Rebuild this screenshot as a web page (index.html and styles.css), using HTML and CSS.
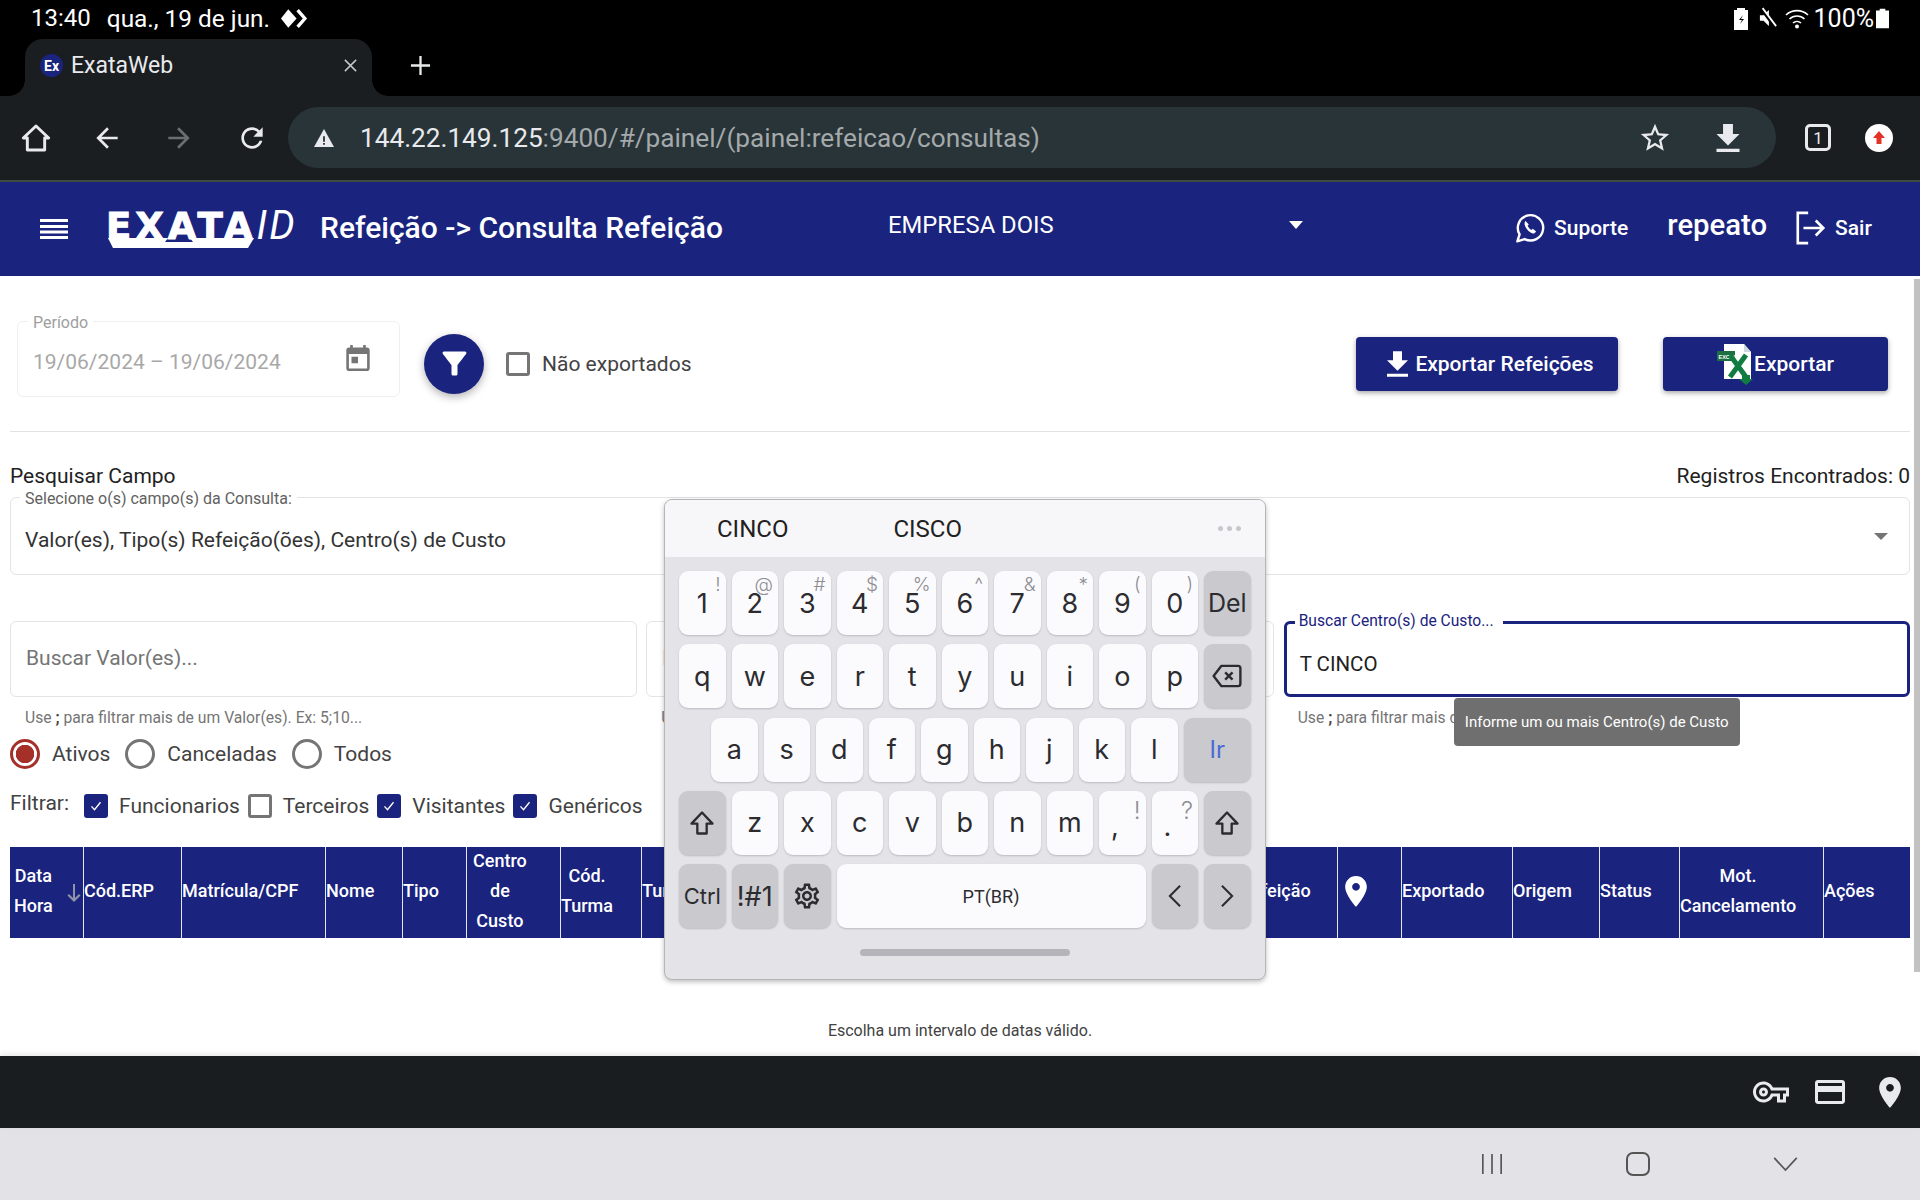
FILE: index.html
```html
<!DOCTYPE html>
<html lang="pt-BR">
<head>
  <meta charset="UTF-8">
  <title>ExataWeb</title>
  <link rel="stylesheet" href="styles.css">
</head>
<body>
  <svg class="defs" width="0" height="0">
    <symbol id="iconPin" viewBox="5 2 14 20"><path fill-rule="evenodd" d="M12 2C8.13 2 5 5.13 5 9c0 5.25 7 13 7 13s7-7.75 7-13c0-3.87-3.13-7-7-7zm0 9.5c-1.38 0-2.5-1.12-2.5-2.5s1.12-2.5 2.5-2.5 2.5 1.12 2.5 2.5-1.12 2.5-2.5 2.5z"/></symbol>
    <symbol id="iconShift" viewBox="0 0 24 24"><path d="M12 3 3 12.5h5V21h8v-8.5h5z" fill="none" stroke="currentColor" stroke-width="2" stroke-linejoin="round"/></symbol>
    <symbol id="iconCheck" viewBox="0 0 24 24"><path d="M6 12.5l4 4.5 8-10" fill="none" stroke="#fff" stroke-width="1.8"/></symbol>
    <symbol id="iconDownload" viewBox="5 3 14 17"><path d="M19 9h-4V3H9v6H5l7 7 7-7zM5 18v2h14v-2H5z"/></symbol>
  </svg>

  <!-- Barra de status do tablet -->
  <div class="statusBar">
    <span class="statusTime">13:40</span>
    <span class="statusDate">qua., 19 de jun.</span>
    <svg class="statusDiamond" viewBox="0 0 26 18"><path d="M7 0l8 9-8 9-7-9z" fill="#fff"/><path d="M16 1l7 8-7 8" fill="none" stroke="#fff" stroke-width="3.2"/></svg>
    <div class="statusRight">
      <svg class="statusIcon" viewBox="0 0 14 24"><path d="M3 4V2h8v2h3v20H0V4z" fill="#fff"/><path d="M9 9l-4 5h3l-2 4 4-5H7z" fill="#000"/></svg>
      <svg class="statusIcon mute" viewBox="0 0 20 24"><path d="M1 9v6h4l6 6V3L5 9z" fill="#fff"/><path d="M3 2l15 20" stroke="#000" stroke-width="4"/><path d="M4 1l15 20" stroke="#fff" stroke-width="2"/></svg>
      <svg class="statusIcon wifi" viewBox="0 0 24 24"><path d="M1 9a16 16 0 0 1 22 0M4.5 13a11 11 0 0 1 15 0M8 17a6 6 0 0 1 8 0" fill="none" stroke="#fff" stroke-width="1.6"/><circle cx="12" cy="20.5" r="2" fill="#fff"/></svg>
      <span class="statusPercent">100%</span>
      <svg class="statusBattery" viewBox="0 0 14 24"><path d="M4 2h6v2h4v19H0V4h4z" fill="#fff"/></svg>
    </div>
  </div>

  <!-- Abas do navegador -->
  <div class="tabStrip">
    <div class="tab">
      <span class="favicon">Ex</span>
      <span class="tabTitle">ExataWeb</span>
      <svg class="tabClose" viewBox="0 0 16 16"><path d="M2 2l12 12M14 2L2 14" stroke="#c4c7c8" stroke-width="1.6"/></svg>
    </div>
    <svg class="tabNew" viewBox="0 0 22 22"><path d="M11 1v20M1 11h20" stroke="#e8eaea" stroke-width="2.4"/></svg>
  </div>

  <!-- Barra de endereço -->
  <div class="urlBar">
    <svg class="navIcon home" viewBox="0 0 24 24"><path d="M12 3 2.5 12H5.5v9h13v-9h3z" fill="none" stroke="#e8eaed" stroke-width="2.2" stroke-linejoin="round"/></svg>
    <svg class="navIcon back" viewBox="0 0 24 24"><path fill="#e8eaed" d="M20 11H7.83l5.59-5.59L12 4l-8 8 8 8 1.41-1.41L7.83 13H20v-2z"/></svg>
    <svg class="navIcon forward" viewBox="0 0 24 24"><path fill="#6b6f72" d="M12 4l-1.41 1.41L16.17 11H4v2h12.17l-5.58 5.59L12 20l8-8z"/></svg>
    <svg class="navIcon reload" viewBox="0 0 24 24"><path fill="#e8eaed" d="M17.65 6.35C16.2 4.9 14.21 4 12 4c-4.42 0-7.99 3.58-7.99 8s3.57 8 7.99 8c3.73 0 6.84-2.55 7.73-6h-2.08c-.82 2.33-3.04 4-5.65 4-3.31 0-6-2.69-6-6s2.69-6 6-6c1.66 0 3.14.69 4.22 1.78L13 11h7V4l-2.35 2.35z"/></svg>
    <div class="urlPill">
      <svg class="urlWarning" viewBox="0 0 24 22"><path d="M1 21h22L12 1z" fill="#e8eaed"/><path d="M11 9h2v6h-2zM11 16.5h2v2h-2z" fill="#283438"/></svg>
      <span class="urlText"><span class="urlHost">144.22.149.125</span>:9400/#/painel/(painel:refeicao/consultas)</span>
      <svg class="urlStar" viewBox="0 0 24 24"><path fill="#e8eaed" d="M22 9.24l-7.19-.62L12 2 9.19 8.63 2 9.24l5.46 4.73L5.82 21 12 17.27 18.18 21l-1.63-7.03L22 9.24zM12 15.4l-3.76 2.27 1-4.28-3.32-2.88 4.38-.38L12 6.1l1.71 4.04 4.38.38-3.32 2.88 1 4.28L12 15.4z"/></svg>
      <svg class="urlDownload"><use href="#iconDownload"/></svg>
    </div>
    <span class="tabCount">1</span>
    <span class="updateDot"><svg viewBox="0 0 12 14"><path d="M6 0 0 7h3.5v6h5V7H12z" fill="#e53227"/></svg></span>
  </div>

  <!-- Cabeçalho do sistema -->
  <header class="appHeader">
    <svg class="menuIcon" viewBox="0 0 28 20"><path d="M0 1.5h28M0 7.5h28M0 13h28M0 18.5h28" stroke="#fff" stroke-width="3"/></svg>
    <div class="logo">
      <span class="logoExata">EXATA</span><span class="logoId">ID</span>
      <svg class="logoSwoosh" viewBox="0 0 146 10"><path d="M0 0h60l-3 4h28l-3-4h64l-6 10H5z" fill="#fff"/></svg>
    </div>
    <span class="pageTitle">Refeição -&gt; Consulta Refeição</span>
    <div class="companySelect">
      <span>EMPRESA DOIS</span>
      <i class="caret"></i>
    </div>
    <div class="headerLink support">
      <svg class="whatsIcon" viewBox="0 0 24 24"><path d="M2.5 22l1.7-5.3A9.5 9.5 0 1 1 8 20.3z" fill="none" stroke="#fff" stroke-width="1.8" stroke-linejoin="round"/><path d="M8.7 6.8c-1.2.9-1.1 3.2.9 5.9 2.1 2.7 4.4 3.8 5.8 3.2l1.2-1.3-2.5-2-1.1.9c-1.1-.6-2.2-1.8-2.8-3.1l.9-1z" fill="#fff"/></svg>
      <span>Suporte</span>
    </div>
    <span class="userName">repeato</span>
    <div class="headerLink logout">
      <svg class="logoutIcon" viewBox="0 0 32 36"><path d="M13 2H2v32h11" fill="none" stroke="#fff" stroke-width="2.8"/><path d="M8 18h21M21 10l8 8-8 8" fill="none" stroke="#fff" stroke-width="2.8"/></svg>
      <span>Sair</span>
    </div>
  </header>

  <main class="content">
    <!-- Período e exportação -->
    <section class="topRow">
      <div class="field periodField">
        <span class="fieldLabel">Período</span>
        <span class="periodValue">19/06/2024 – 19/06/2024</span>
        <svg class="calendarIcon" viewBox="3 2 18 20"><path fill="#757575" fill-rule="evenodd" d="M19 4h-1V2h-2v2H8V2H6v2H5c-1.1 0-2 .9-2 2v14c0 1.1.9 2 2 2h14c1.1 0 2-.9 2-2V6c0-1.1-.9-2-2-2zm0 16H5V9h14v11zM7 11h5v5H7z"/></svg>
      </div>
      <button class="filterButton">
        <svg viewBox="3 3 18 18"><path fill="#fff" d="M4.25 5.61C6.27 8.2 10 13 10 13v6c0 .55.45 1 1 1h2c.55 0 1-.45 1-1v-6s3.72-4.8 5.74-7.39A.998.998 0 0 0 18.95 4H5.04c-.83 0-1.3.95-.79 1.61z"/></svg>
      </button>
      <label class="check notExported"><i class="checkBox"></i>Não exportados</label>
      <div class="exportGroup">
        <button class="exportButton mealsButton">
          <svg class="btnDownload"><use href="#iconDownload"/></svg>
          Exportar Refeições
        </button>
        <button class="exportButton excelButton">
          <svg class="excelIcon" viewBox="0 0 36 42">
            <path d="M7 1h20l7 8v27H7z" fill="#fff"/>
            <path d="M27 1v8h7z" fill="#cfd8dc"/>
            <rect x="0" y="8" width="18" height="10" fill="#1d6f42"/>
            <text x="1.5" y="15.5" class="excelLabel">EXCEL</text>
            <path d="M13 12l16 22M29 12 13 34" stroke="#107c41" stroke-width="5"/>
            <path d="M25 32h8v4h3l-7 6-7-6h3z" fill="#107c41"/>
          </svg>
          Exportar
        </button>
      </div>
    </section>

    <!-- Pesquisa -->
    <div class="searchHead">
      <span>Pesquisar Campo</span>
      <span>Registros Encontrados: 0</span>
    </div>
    <div class="field selectField">
      <span class="fieldLabel">Selecione o(s) campo(s) da Consulta:</span>
      <span class="selectValue">Valor(es), Tipo(s) Refeição(ões), Centro(s) de Custo</span>
      <i class="selectCaret"></i>
    </div>

    <div class="searchGrid">
      <div class="searchCol">
        <div class="field inputField"><span class="placeholder">Buscar Valor(es)...</span></div>
        <p class="hint">Use <b>;</b> para filtrar mais de um Valor(es). Ex: 5;10...</p>
      </div>
      <div class="searchCol">
        <div class="field inputField"><span class="placeholder">Buscar Tipo(s) Refeição(ões)...</span></div>
        <p class="hint">Use <b>;</b> para filtrar mais de um Tipo(s) Refeição(ões)...</p>
      </div>
      <div class="searchCol">
        <div class="field inputField focused">
          <span class="fieldLabel">Buscar Centro(s) de Custo...</span>
          <span class="inputValue">T CINCO</span>
        </div>
        <p class="hint">Use <b>;</b> para filtrar mais de um Centro(s) de Custo. Ex: 3;8...</p>
        <div class="tooltip">Informe um ou mais Centro(s) de Custo</div>
      </div>
    </div>

    <div class="radioRow">
      <label class="radio selected"><i></i>Ativos</label>
      <label class="radio"><i></i>Canceladas</label>
      <label class="radio"><i></i>Todos</label>
    </div>

    <div class="filterRow">
      <span class="filterTitle">Filtrar:</span>
      <label class="check"><i class="checkBox on"><svg><use href="#iconCheck"/></svg></i>Funcionarios</label>
      <label class="check"><i class="checkBox"></i>Terceiros</label>
      <label class="check"><i class="checkBox on"><svg><use href="#iconCheck"/></svg></i>Visitantes</label>
      <label class="check"><i class="checkBox on"><svg><use href="#iconCheck"/></svg></i>Genéricos</label>
    </div>

    <!-- Tabela -->
    <div class="tableHead">
      <div class="th sorted">
        <div class="thStack">Data<br>Hora</div>
        <svg class="sortArrow" viewBox="0 0 16 20"><path fill="#8f93a8" d="M7 1h2v14l4-4 1.5 1.5L8 19l-6.5-6.5L3 11l4 4z"/></svg>
      </div>
      <div class="th">Cód.ERP</div>
      <div class="th">Matrícula/CPF</div>
      <div class="th">Nome</div>
      <div class="th">Tipo</div>
      <div class="th costCenter"><div class="thStack">Centro<br>de<br>Custo</div></div>
      <div class="th"><div class="thStack">Cód.<br>Turma</div></div>
      <div class="th">Turma</div>
      <div class="th"></div>
      <div class="th">Refeição</div>
      <div class="th pinCell"><svg class="pinIcon"><use href="#iconPin"/></svg></div>
      <div class="th">Exportado</div>
      <div class="th">Origem</div>
      <div class="th">Status</div>
      <div class="th"><div class="thStack">Mot.<br>Cancelamento</div></div>
      <div class="th">Ações</div>
    </div>
    <p class="emptyMessage">Escolha um intervalo de datas válido.</p>

    <div class="scrollThumb"></div>
  </main>

  <!-- Barra inferior do navegador -->
  <div class="bottomBar">
    <svg class="keyIcon" viewBox="0 0 24 24"><path fill="#e8eaed" fill-rule="evenodd" d="M22 19h-6v-4h-2.68c-1.14 2.42-3.6 4-6.32 4-3.86 0-7-3.14-7-7s3.14-7 7-7c2.72 0 5.17 1.58 6.32 4H24v6h-2v4zm-4-2h2v-4h2v-2H11.94l-.23-.67C11.01 8.34 9.11 7 7 7c-2.76 0-5 2.24-5 5s2.24 5 5 5c2.11 0 4.01-1.34 4.71-3.33l.23-.67H18v4zM7 15c-1.65 0-3-1.35-3-3s1.35-3 3-3 3 1.35 3 3-1.35 3-3 3zm0-4c-.55 0-1 .45-1 1s.45 1 1 1 1-.45 1-1-.45-1-1-1z"/></svg>
    <svg class="cardIcon" viewBox="2 4 20 16"><path fill="#e8eaed" fill-rule="evenodd" d="M20 4H4c-1.11 0-1.99.89-1.99 2L2 18c0 1.11.89 2 2 2h16c1.11 0 2-.89 2-2V6c0-1.11-.89-2-2-2zm0 14H4v-6h16v6zm0-10H4V6h16v2z"/></svg>
    <svg class="bottomPin"><use href="#iconPin"/></svg>
  </div>

  <!-- Barra de navegação do Android -->
  <div class="navBar">
    <svg class="sysRecents" viewBox="0 0 24 24"><path d="M2 1v22M12 1v22M22 1v22" stroke="#555" stroke-width="1.8"/></svg>
    <span class="sysHome"></span>
    <svg class="sysBack" viewBox="0 0 26 16"><path d="M1 1l12 13L25 1" fill="none" stroke="#555" stroke-width="1.8"/></svg>
  </div>

  <!-- Teclado flutuante -->
  <div class="keyboard">
    <div class="suggestions">
      <span class="sugA">CINCO</span>
      <span class="sugB">CISCO</span>
      <span class="sugMore"><i></i><i></i><i></i></span>
    </div>
    <div class="keyRows">
      <div class="keyRow">
        <span class="key">1<sup>!</sup></span><span class="key">2<sup>@</sup></span><span class="key">3<sup>#</sup></span><span class="key">4<sup>$</sup></span><span class="key">5<sup>%</sup></span><span class="key">6<sup>^</sup></span><span class="key">7<sup>&amp;</sup></span><span class="key">8<sup>*</sup></span><span class="key">9<sup>(</sup></span><span class="key">0<sup>)</sup></span><span class="key fn delKey">Del</span>
      </div>
      <div class="keyRow">
        <span class="key">q</span><span class="key">w</span><span class="key">e</span><span class="key">r</span><span class="key">t</span><span class="key">y</span><span class="key">u</span><span class="key">i</span><span class="key">o</span><span class="key">p</span>
        <span class="key fn"><svg class="backspaceIcon" viewBox="0 0 32 26"><path d="M10 2h18a2.5 2.5 0 0 1 2.5 2.5v17A2.5 2.5 0 0 1 28 24H10L1.5 13z" fill="none" stroke="#2c2c30" stroke-width="2.6" stroke-linejoin="round"/><path d="M14 9l8 8M22 9l-8 8" stroke="#2c2c30" stroke-width="2.6"/></svg></span>
      </div>
      <div class="keyRow homeRow">
        <span class="key">a</span><span class="key">s</span><span class="key">d</span><span class="key">f</span><span class="key">g</span><span class="key">h</span><span class="key">j</span><span class="key">k</span><span class="key">l</span><span class="key fn goKey">Ir</span>
      </div>
      <div class="keyRow">
        <span class="key fn"><svg class="shiftIcon"><use href="#iconShift"/></svg></span>
        <span class="key">z</span><span class="key">x</span><span class="key">c</span><span class="key">v</span><span class="key">b</span><span class="key">n</span><span class="key">m</span>
        <span class="key punct">,<sup>!</sup></span><span class="key punct">.<sup>?</sup></span>
        <span class="key fn"><svg class="shiftIcon"><use href="#iconShift"/></svg></span>
      </div>
      <div class="keyRow">
        <span class="key fn small">Ctrl</span>
        <span class="key fn">!#1</span>
        <span class="key fn"><svg class="gearIcon" viewBox="0 0 24 24"><path fill="#2c2c30" fill-rule="evenodd" d="M19.43 12.98c.04-.32.07-.64.07-.98 0-.34-.03-.66-.07-.98l2.11-1.65c.19-.15.24-.42.12-.64l-2-3.46c-.09-.16-.26-.25-.44-.25-.06 0-.12.01-.17.03l-2.49 1c-.52-.4-1.08-.73-1.69-.98l-.38-2.65C14.46 2.18 14.25 2 14 2h-4c-.25 0-.46.18-.49.42l-.38 2.65c-.61.25-1.17.59-1.69.98l-2.49-1c-.06-.02-.12-.03-.18-.03-.17 0-.34.09-.43.25l-2 3.46c-.13.22-.07.49.12.64l2.11 1.65c-.04.32-.07.65-.07.98 0 .33.03.66.07.98l-2.11 1.65c-.19.15-.24.42-.12.64l2 3.46c.09.16.26.25.44.25.06 0 .12-.01.17-.03l2.49-1c.52.4 1.08.73 1.69.98l.38 2.65c.03.24.24.42.49.42h4c.25 0 .46-.18.49-.42l.38-2.65c.61-.25 1.17-.59 1.69-.98l2.49 1c.06.02.12.03.18.03.17 0 .34-.09.43-.25l2-3.46c.12-.22.07-.49-.12-.64l-2.11-1.65zm-1.98-1.71c.04.31.05.52.05.73 0 .21-.02.43-.05.73l-.14 1.13.89.7 1.08.84-.7 1.21-1.27-.51-1.04-.42-.9.68c-.43.32-.84.56-1.25.73l-1.06.43-.16 1.13-.2 1.35h-1.4l-.19-1.35-.16-1.13-1.06-.43c-.43-.18-.83-.41-1.23-.71l-.91-.7-1.06.43-1.27.51-.7-1.21 1.08-.84.89-.7-.14-1.13c-.03-.31-.05-.54-.05-.74s.02-.43.05-.73l.14-1.13-.89-.7-1.08-.84.7-1.21 1.27.51 1.04.42.9-.68c.43-.32.84-.56 1.25-.73l1.06-.43.16-1.13.2-1.35h1.39l.19 1.35.16 1.13 1.06.43c.43.18.83.41 1.23.71l.91.7 1.06-.43 1.27-.51.7 1.21-1.07.85-.89.7.14 1.13zM12 8c-2.21 0-4 1.79-4 4s1.79 4 4 4 4-1.79 4-4-1.79-4-4-4zm0 6c-1.1 0-2-.9-2-2s.9-2 2-2 2 .9 2 2-.9 2-2 2z"/></svg></span>
        <span class="key spaceKey">PT(BR)</span>
        <span class="key fn"><svg class="arrowIcon" viewBox="0 0 14 24"><path d="M13 1 2 12l11 11" fill="none" stroke="#2c2c30" stroke-width="2.2"/></svg></span>
        <span class="key fn"><svg class="arrowIcon" viewBox="0 0 14 24"><path d="M1 1l11 11L1 23" fill="none" stroke="#2c2c30" stroke-width="2.2"/></svg></span>
      </div>
    </div>
    <div class="kbHandle"></div>
  </div>
</body>
</html>
```

FILE: styles.css
```css
* {
  box-sizing: border-box;
}

body {
  margin: 0;
  width: 1920px;
  height: 1200px;
  display: flex;
  flex-direction: column;
  overflow: hidden;
  position: relative;
  font-family: Roboto, "Liberation Sans", sans-serif;
  color: #212121;
  background: #fff;
}

.defs {
  position: absolute;
}

svg {
  display: block;
  flex: none;
}

/* Barra de status */
.statusBar {
  height: 39px;
  background: #000;
  color: #fff;
  display: flex;
  align-items: center;
  padding: 0 31px 3px 31px;
  font-size: 24px;
}

.statusDate {
  margin-left: 16px;
  font-size: 24.4px;
}

.statusDiamond {
  width: 27px;
  height: 19px;
  margin-left: 11px;
}

.statusRight {
  margin-left: auto;
  display: flex;
  align-items: center;
}

.statusIcon {
  width: 14px;
  height: 24px;
}

.statusIcon.mute {
  width: 18px;
  height: 22px;
  margin-left: 11px;
}

.statusIcon.wifi {
  width: 24px;
  height: 24px;
  margin-left: 8px;
}

.statusPercent {
  margin-left: 5px;
  font-size: 25px;
}

.statusBattery {
  width: 13px;
  height: 24px;
  margin-left: 2px;
}

/* Abas */
.tabStrip {
  height: 57px;
  background: #000;
  display: flex;
  align-items: center;
  padding-left: 25px;
}

.tab {
  width: 347px;
  height: 57px;
  background: #1a1e21;
  border-radius: 18px 18px 0 0;
  display: flex;
  align-items: center;
  padding: 0 14px 4px 15px;
  color: #e8eaed;
  font-size: 23px;
  position: relative;
}

.tab::before,
.tab::after {
  content: "";
  position: absolute;
  bottom: 0;
  width: 16px;
  height: 16px;
}

.tab::before {
  left: -16px;
  background: radial-gradient(circle at 0 0, #000 15.5px, #1a1e21 16px);
}

.tab::after {
  right: -16px;
  background: radial-gradient(circle at 100% 0, #000 15.5px, #1a1e21 16px);
}

.favicon {
  width: 23px;
  height: 23px;
  border-radius: 50%;
  background: #1a237e;
  color: #fff;
  font-size: 14px;
  font-weight: 700;
  display: flex;
  align-items: center;
  justify-content: center;
}

.tabTitle {
  margin-left: 8px;
}

.tabClose {
  width: 15px;
  height: 15px;
  margin-left: auto;
}

.tabNew {
  width: 21px;
  height: 21px;
  margin-left: 38px;
  margin-bottom: 4px;
}

/* Barra de endereço */
.urlBar {
  height: 86px;
  background: #1a1e21;
  border-bottom: 2px solid #3f4a3e;
  padding: 11px 0 12px;
  display: flex;
  align-items: center;
  position: relative;
  flex: none;
}

.navIcon {
  width: 32px;
  height: 32px;
}

.navIcon.home {
  margin-left: 20px;
}

.navIcon.back {
  margin-left: 39px;
}

.navIcon.forward {
  margin-left: 40px;
}

.navIcon.reload {
  margin-left: 41px;
}

.urlPill {
  width: 1488px;
  height: 61px;
  margin-left: 20px;
  background: #283438;
  border-radius: 31px;
  display: flex;
  align-items: center;
  padding-left: 25px;
}

.urlWarning {
  width: 22px;
  height: 20px;
}

.urlText {
  margin-left: 25px;
  font-size: 26.2px;
  color: #a4a9ab;
}

.urlHost {
  color: #e8eaed;
}

.urlStar {
  width: 34px;
  height: 34px;
  margin-left: auto;
}

.urlDownload {
  width: 24px;
  height: 28px;
  margin-left: 44px;
  margin-right: 36px;
  fill: #e8eaed;
}

.tabCount {
  width: 26px;
  height: 27px;
  border: 3px solid #e8eaed;
  border-radius: 5px;
  margin-left: 29px;
  color: #e8eaed;
  font-size: 17px;
  display: flex;
  align-items: center;
  justify-content: center;
}

.updateDot {
  width: 28px;
  height: 28px;
  margin-left: 34px;
  border-radius: 50%;
  background: #fff;
  display: flex;
  align-items: center;
  justify-content: center;
}

.updateDot svg {
  width: 12px;
  height: 14px;
}

/* Cabeçalho */
.appHeader {
  height: 94px;
  background: #1a237e;
  color: #fff;
  display: flex;
  align-items: center;
  padding-left: 40px;
  flex: none;
}

.menuIcon {
  width: 28px;
  height: 20px;
}

.logo {
  width: 192px;
  height: 40px;
  margin-left: 38px;
  position: relative;
  white-space: nowrap;
  line-height: 34px;
  flex: none;
}

.logoExata {
  font-family: "DejaVu Sans", sans-serif;
  font-weight: 700;
  font-size: 37px;
  letter-spacing: 4px;
  -webkit-text-stroke: 1px #fff;
}

.logoId {
  font-style: italic;
  font-size: 40px;
  letter-spacing: 2px;
}

.logoSwoosh {
  position: absolute;
  left: 2px;
  top: 29px;
  width: 146px;
  height: 10px;
}

.pageTitle {
  margin-left: 22px;
  margin-bottom: 4px;
  font-size: 30px;
  font-weight: 500;
  white-space: nowrap;
  width: 568px;
}

.companySelect {
  width: 415px;
  font-size: 23.8px;
  display: flex;
  align-items: center;
  justify-content: space-between;
  margin-bottom: 8px;
}

.caret {
  width: 0;
  height: 0;
  border-left: 7px solid transparent;
  border-right: 7px solid transparent;
  border-top: 8px solid #fff;
}

.headerLink {
  display: flex;
  align-items: center;
  font-size: 21px;
  font-weight: 500;
  margin-bottom: 3px;
}

.headerLink.support {
  margin-left: 211px;
}

.whatsIcon {
  width: 32px;
  height: 32px;
  margin-right: 8px;
}

.userName {
  font-size: 29.3px;
  font-weight: 500;
  margin-left: 39px;
  margin-bottom: 9px;
}

.headerLink.logout {
  margin-left: 28px;
}

.logoutIcon {
  width: 32px;
  height: 34px;
  margin-right: 8px;
}

/* Conteúdo */
.content {
  height: 780px;
  padding: 0 10px;
  position: relative;
  overflow: hidden;
  flex: none;
}

.scrollThumb {
  position: absolute;
  top: 3px;
  right: 0;
  width: 6px;
  height: 693px;
  background: #c2c2c2;
}

.topRow {
  margin-top: 45px;
  height: 111px;
  padding: 0 22px 25px 7px;
  border-bottom: 1px solid #e2e2e2;
  display: flex;
  align-items: center;
}

.field {
  border: 1px solid #e4e4e4;
  border-radius: 6px;
  position: relative;
  display: flex;
  align-items: center;
  background: #fff;
}

.fieldLabel {
  position: absolute;
  top: -8px;
  left: 10px;
  padding: 0 5px;
  background: #fff;
  font-size: 16px;
  line-height: 17px;
  color: #616161;
  white-space: nowrap;
}

.periodField {
  width: 383px;
  height: 76px;
  align-self: flex-start;
  border-color: #efefef;
  padding-left: 15px;
}

.periodField .fieldLabel {
  color: #9e9e9e;
}

.periodValue {
  font-size: 21px;
  color: #a8a8a8;
  margin-top: 6px;
}

.calendarIcon {
  width: 24px;
  height: 26px;
  margin-left: auto;
  margin-right: 29px;
  margin-top: -3px;
}

.filterButton {
  width: 60px;
  height: 60px;
  margin-left: 24px;
  border: none;
  border-radius: 50%;
  background: #1a237e;
  box-shadow: 0 3px 8px rgba(0, 0, 0, 0.3);
  display: flex;
  align-items: center;
  justify-content: center;
  padding: 0;
}

.filterButton svg {
  width: 27px;
  height: 27px;
}

.check {
  display: flex;
  align-items: center;
  font-size: 21px;
  color: #424242;
}

.notExported {
  margin-left: 22px;
}

.checkBox {
  width: 24px;
  height: 24px;
  border: 3px solid #757575;
  border-radius: 3px;
  margin-right: 12px;
  display: block;
}

.checkBox.on {
  background: #1a237e;
  border-color: #1a237e;
}

.checkBox svg {
  width: 18px;
  height: 18px;
}

.exportGroup {
  margin-left: auto;
  display: flex;
  gap: 45px;
}

.exportButton {
  height: 54px;
  border: none;
  border-radius: 4px;
  background: #1a237e;
  color: #fff;
  font-family: inherit;
  font-size: 21px;
  font-weight: 500;
  box-shadow: 0 2px 5px rgba(0, 0, 0, 0.35);
  display: flex;
  align-items: center;
  justify-content: center;
  padding: 0;
}

.mealsButton {
  width: 262px;
  padding-left: 7px;
}

.excelButton {
  width: 225px;
}

.btnDownload {
  width: 21px;
  height: 26px;
  fill: #fff;
  margin-right: 7px;
}

.excelIcon {
  width: 36px;
  height: 42px;
  margin-right: 1px;
}

.excelLabel {
  font-family: "Liberation Sans", sans-serif;
  font-size: 5.5px;
  font-weight: 700;
  fill: #fff;
}

.searchHead {
  margin-top: 32px;
  display: flex;
  justify-content: space-between;
  font-size: 21px;
  line-height: 24px;
}

.selectField {
  margin-top: 9px;
  height: 78px;
  padding-left: 14px;
}

.selectField .fieldLabel {
  left: 9px;
}

.selectValue {
  font-size: 21px;
  margin-top: 7px;
  color: #333;
}

.selectCaret {
  position: absolute;
  right: 21px;
  top: 35px;
  width: 0;
  height: 0;
  border-left: 7px solid transparent;
  border-right: 7px solid transparent;
  border-top: 7px solid #757575;
}

.searchGrid {
  margin-top: 46px;
  display: grid;
  grid-template-columns: repeat(3, 1fr);
  gap: 9px;
}

.searchCol {
  position: relative;
}

.inputField {
  height: 76px;
  padding-left: 15px;
  font-size: 21px;
}

.placeholder {
  color: #757575;
  margin-bottom: 3px;
}

.inputField.focused {
  border: 3px solid #1a237e;
  padding-left: 13px;
  margin-left: 1px;
  font-size: 20.5px;
}

.inputField.focused .fieldLabel {
  left: 8px;
  top: -11px;
  padding: 0 9px 0 4px;
  font-size: 15.6px;
  color: #1a237e;
}

.inputValue {
  margin-top: 10px;
}

.hint {
  margin: 11px 0 0;
  padding-left: 15px;
  font-size: 15.7px;
  line-height: 20px;
  color: #757575;
  white-space: nowrap;
  overflow: hidden;
}

.hint b {
  color: #424242;
}

.tooltip {
  position: absolute;
  top: 77px;
  left: 171px;
  width: 286px;
  height: 48px;
  background: #6f6f6f;
  border-radius: 4px;
  color: #fff;
  font-size: 15px;
  display: flex;
  align-items: center;
  justify-content: center;
}

.radioRow {
  margin-top: 11px;
  height: 30px;
  display: flex;
  align-items: center;
  font-size: 21px;
  color: #424242;
}

.radio {
  display: flex;
  align-items: center;
  margin-right: 15px;
}

.radio i {
  width: 30px;
  height: 30px;
  border: 3px solid #757575;
  border-radius: 50%;
  margin-right: 12px;
  display: block;
}

.radio.selected i {
  border-color: #a5302a;
  background: radial-gradient(circle, #a5302a 9px, #fff 9.5px);
}

.filterRow {
  margin-top: 25px;
  height: 24px;
  display: flex;
  align-items: center;
}

.filterTitle {
  font-size: 21px;
  color: #424242;
  margin-right: 15px;
  margin-top: -6px;
}

.filterRow .check {
  margin-right: 8px;
}

.filterRow .checkBox {
  margin-right: 11px;
}

.tableHead {
  margin-top: 29px;
  height: 91px;
  background: #1a237e;
  color: #fff;
  display: grid;
  grid-template-columns: 73px 98px 144px 77px 64px 94px 81px 259px 339px 98px 64px 111px 87px 80px 144px 87px;
  font-size: 18px;
  font-weight: 500;
  line-height: 30px;
}

.th {
  border-left: 1px solid #e6e6ee;
  display: flex;
  align-items: center;
  overflow: hidden;
  white-space: nowrap;
  padding-bottom: 3px;
}

.th.sorted {
  border-left: none;
  padding-left: 4px;
  position: relative;
}

.th.costCenter {
  padding-left: 6px;
}

.thStack {
  text-align: center;
}

.sortArrow {
  position: absolute;
  right: 1px;
  top: 36px;
  width: 16px;
  height: 20px;
}

.pinCell {
  padding-left: 7px;
}

.pinIcon {
  width: 22px;
  height: 31px;
  fill: #fff;
}

.emptyMessage {
  margin: 83px 0 0;
  text-align: center;
  font-size: 16px;
  line-height: 20px;
  color: #424242;
}

/* Barra inferior */
.bottomBar {
  height: 72px;
  background: #191d20;
  box-shadow: 0 -2px 6px rgba(0, 0, 0, 0.1);
  display: flex;
  align-items: center;
  justify-content: flex-end;
  padding-right: 19px;
  z-index: 1;
  flex: none;
}

.keyIcon {
  width: 36px;
  height: 36px;
}

.cardIcon {
  width: 30px;
  height: 24px;
  margin-left: 26px;
}

.bottomPin {
  width: 22px;
  height: 31px;
  margin-left: 34px;
  fill: #e8eaed;
}

.navBar {
  height: 72px;
  background: #e2e2e7;
  display: flex;
  align-items: center;
  padding-left: 1481px;
  flex: none;
}

.sysRecents {
  width: 22px;
  height: 24px;
}

.sysHome {
  width: 24px;
  height: 24px;
  margin-left: 123px;
  border: 2px solid #555;
  border-radius: 7px;
}

.sysBack {
  width: 25px;
  height: 15px;
  margin-left: 123px;
}

/* Teclado */
.keyboard {
  position: absolute;
  left: 664px;
  top: 499px;
  width: 602px;
  height: 481px;
  background: #e3e3e8;
  border: 1px solid #b5b5b8;
  border-radius: 8px;
  box-shadow: 0 2px 5px rgba(0, 0, 0, 0.25);
  z-index: 2;
  overflow: hidden;
  font-family: Inter, Roboto, sans-serif;
}

.suggestions {
  height: 57px;
  background: #f7f7fa;
  display: flex;
  align-items: center;
  font-family: Roboto, sans-serif;
  font-size: 24px;
  position: relative;
}

.sugA {
  margin-left: 52px;
}

.sugB {
  margin-left: 105px;
}

.sugMore {
  margin-left: auto;
  margin-right: 24px;
  display: flex;
  gap: 4px;
}

.sugMore i {
  width: 5px;
  height: 5px;
  border-radius: 50%;
  background: #c8c8cc;
}

.keyRows {
  padding: 14px 14px 0;
  display: flex;
  flex-direction: column;
  gap: 9.25px;
}

.keyRow {
  height: 64px;
  display: flex;
  gap: 6px;
}

.homeRow {
  padding-left: 32px;
}

.key {
  width: 46.5px;
  height: 64px;
  background: #fbfbfe;
  border-radius: 9px;
  box-shadow: 0 1px 2px rgba(0, 0, 0, 0.18);
  color: #2c2c30;
  font-size: 27px;
  display: flex;
  align-items: center;
  justify-content: center;
  position: relative;
}

.key sup {
  position: absolute;
  top: 4px;
  right: 5px;
  font-size: 19px;
  line-height: 20px;
  font-weight: 300;
  color: #8d8d92;
}

.key.fn {
  background: #c9c9ce;
}

.key.small {
  font-size: 22px;
}

.delKey {
  font-size: 25px;
}

.goKey {
  width: 67.5px;
  color: #4a6bd8;
  font-size: 24px;
}

.punct {
  justify-content: flex-start;
  padding-left: 12px;
  padding-top: 8px;
}

.punct sup {
  top: 10px;
  font-size: 24px;
}

.spaceKey {
  width: 309px;
  font-family: Roboto, sans-serif;
  font-size: 18px;
}

.backspaceIcon {
  width: 30px;
  height: 24px;
}

.shiftIcon {
  width: 28px;
  height: 28px;
  color: #2c2c30;
}

.gearIcon {
  width: 30px;
  height: 30px;
}

.arrowIcon {
  width: 13px;
  height: 24px;
}

.kbHandle {
  width: 210px;
  height: 7px;
  margin: 21px auto 0;
  border-radius: 4px;
  background: #b4b4ba;
}
```
